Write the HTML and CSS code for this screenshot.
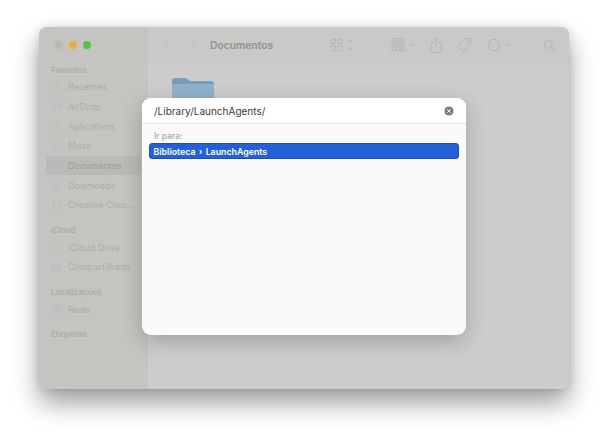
FILE: index.html
```html
<!DOCTYPE html>
<html lang="pt">
<head>
<meta charset="utf-8">
<title>Finder</title>
<link rel="stylesheet" href="styles.css">
</head>
<body>
<div class="window">
  <aside class="sidebar">
    <div class="lights"><i class="light grey"></i><i class="light yellow"></i><i class="light green"></i></div>
    <div class="label first">Favoritos</div>
    <div class="row"><svg class="ic" viewBox="0 0 14 14"><circle cx="7" cy="7" r="5.2"/><path d="M7 3.6V7L5 8.6"/></svg>Recentes</div>
    <div class="row"><svg class="ic" viewBox="0 0 14 14"><path class="fill" d="M7 1.5a6 6 0 0 0-5.600 8.200L3 12h1.200L6 7.500h2L9.800 12H11l1.600-2.300A6 6 0 0 0 7 1.500z"/></svg>AirDrop</div>
    <div class="row"><svg class="ic" viewBox="0 0 14 14"><path d="M7.800 2 3.500 10M6.200 2l4.300 8M2 10h10M5.500 6.500h3"/></svg>Aplicativos</div>
    <div class="row"><svg class="ic" viewBox="0 0 14 14"><rect x="1.500" y="2.500" width="11" height="9" rx="1.200"/><path class="fill" d="M2 9h10v2H2z"/></svg>Mesa</div>
    <div class="row active"><svg class="ic" viewBox="0 0 14 14"><path d="M3 1.500h5l3 3v8H3zM8 1.500v3h3"/></svg>Documentos</div>
    <div class="row"><svg class="ic" viewBox="0 0 14 14"><circle cx="7" cy="7" r="5.200"/><path d="M7 3.800v6M4.800 7.600 7 9.800l2.200-2.200"/></svg>Downloads</div>
    <div class="row"><svg class="ic" viewBox="0 0 14 14"><path d="M3 1.500h5l3 3v8H3zM8 1.500v3h3"/></svg>Creative Clou...</div>
    <div class="label">iCloud</div>
    <div class="row"><svg class="ic" viewBox="0 0 14 14"><path d="M4 11h6.500a2.500 2.500 0 0 0 .4-5A3.500 3.500 0 0 0 4.200 5.400 2.900 2.900 0 0 0 4 11z"/></svg>iCloud Drive</div>
    <div class="row"><svg class="ic" viewBox="0 0 14 14"><path d="M1.500 4h4l1 1.200h4V12h-9zM1.500 6.500h9"/><circle class="fill" cx="11.500" cy="3.500" r="1.500"/></svg>Compartilhado</div>
    <div class="label">Localizações</div>
    <div class="row"><svg class="ic" viewBox="0 0 14 14"><circle cx="7" cy="7" r="5.200"/><path d="M2 7h10M7 2v10M3.500 4h7M3.500 10h7"/></svg>Rede</div>
    <div class="label">Etiquetas</div>
  </aside>
  <main class="main">
    <header class="toolbar">
      <svg class="tb nav" viewBox="0 0 12 16"><path d="M8.500 2.500 3 8l5.500 5.500"/></svg>
      <svg class="tb nav next" viewBox="0 0 12 16"><path d="M3.500 2.500 9 8l-5.500 5.500"/></svg>
      <span class="title">Documentos</span>
      <svg class="tb grid" viewBox="0 0 24 14"><rect x="1" y="1" width="4.500" height="4.500" rx=".8"/><rect x="7.500" y="1" width="4.500" height="4.500" rx=".8"/><rect x="1" y="8" width="4.500" height="4.500" rx=".8"/><rect x="7.500" y="8" width="4.500" height="4.500" rx=".8"/><path d="m17.500 5 2.500-3 2.500 3M17.500 9l2.500 3 2.500-3"/></svg>
      <svg class="tb group" viewBox="0 0 32 14"><path d="M1 .8h12.500M1 7.500h12.500"/><rect x="1" y="2.800" width="3.300" height="3"/><rect x="5.600" y="2.800" width="3.300" height="3"/><rect x="10.200" y="2.800" width="3.300" height="3"/><rect x="1" y="9.300" width="3.300" height="3.500"/><rect x="5.600" y="9.300" width="3.300" height="3.500"/><rect x="10.200" y="9.300" width="3.300" height="3.500"/><path d="m18 5.500 2.700 2.700 2.700-2.700"/></svg>
      <svg class="tb share" viewBox="0 0 14 18"><path d="M4.500 6.500H2v10h10v-10H9.500M7 11.500V1.500M4.500 3.800 7 1.300l2.500 2.500"/></svg>
      <svg class="tb tag" viewBox="0 0 16 16"><path d="M9.500 1.500h4.500a.5.500 0 0 1 .5.500v4.500L7 14.500 1.500 9z"/><circle cx="11.700" cy="4.300" r=".8"/></svg>
      <svg class="tb more" viewBox="0 0 28 14"><circle cx="7" cy="7" r="5.700"/><path class="dots" d="M4.500 7h.01M7 7h.01M9.500 7h.01"/><path d="m18 5.500 2.700 2.700 2.700-2.700"/></svg>
      <svg class="tb search" viewBox="0 0 14 14"><circle cx="5.800" cy="5.800" r="4.300"/><path d="m9 9 4 4"/></svg>
    </header>
    <section class="content">
      <svg class="folder" viewBox="0 0 42 24"><path class="tab" d="M0 5a3 3 0 0 1 3-3h11l4 3h21a3 3 0 0 1 3 3v16H0z"/><path class="body" d="M0 8h42v16H0z"/></svg>
    </section>
  </main>
</div>
<div class="dialog">
  <div class="field"><span>/Library/LaunchAgents/</span><svg class="clear" viewBox="0 0 10 10"><circle cx="5" cy="5" r="5"/><path d="m3.200 3.200 3.600 3.600M6.800 3.200 3.200 6.800"/></svg></div>
  <div class="results">
    <div class="caption">Ir para:</div>
    <div class="hit">Biblioteca <b>›</b> LaunchAgents</div>
  </div>
</div>
</body>
</html>
```
FILE: styles.css
```css
* { box-sizing: border-box; }
html, body { margin: 0; height: 100%; }
body {
  background: #fff;
  font-family: "Inter", "Liberation Sans", sans-serif;
  padding: 27px 39px 52px;
  overflow: hidden;
}
.window {
  display: flex;
  height: 362px;
  border-radius: 8px;
  overflow: hidden;
  background: #cdcdcd;
  box-shadow: 0 14px 26px rgba(0,0,0,.38), 0 0 8px rgba(0,0,0,.12);
}
.sidebar {
  width: 109px;
  flex: none;
  background: #c6c4c1;
  padding: 0 7px;
}
.lights { display: flex; gap: 6px; padding: 14px 0 0 9px; height: 37px; }
.light { width: 8px; height: 8px; border-radius: 50%; }
.grey { background: #bab8b6; }
.yellow { background: #e5b23f; }
.green { background: #5ac14f; }
.label {
  font-size: 8px;
  font-weight: 600;
  color: #adabaa;
  height: 12px;
  line-height: 12px;
  margin: 9.500px 0 0 5px;
}
.label.first { margin-top: 0; }
.row {
  display: flex;
  align-items: center;
  gap: 5px;
  height: 19.700px;
  font-size: 9px;
  padding-left: 5px;
  border-radius: 4px;
  white-space: nowrap;
  color: #aeacaa;
}
.label + .row { margin-top: 1px; }
.row.active { background: #bcbab7; color: #9e9c9a; }
.ic { width: 12px; height: 12px; flex: none; fill: none; stroke: #b7bcc4; stroke-width: 1; }
.ic .fill { fill: #bcc0c6; stroke: none; }
.main { flex: 1; display: flex; flex-direction: column; min-width: 0; }
.toolbar {
  height: 36px;
  flex: none;
  background: #cbc9c7;
  display: flex;
  align-items: center;
  padding-left: 14px;
}
.tb { fill: none; stroke: #b6b4b2; stroke-width: 1; flex: none; }
.nav { width: 10px; height: 14px; stroke-width: 1.200; }
.next { margin-left: 16px; }
.title { font-size: 10.300px; font-weight: 600; color: #94928f; margin-left: 12px; width: 120px; }
.grid { width: 24px; height: 14px; }
.group { width: 32px; height: 14px; margin-left: 37px; }
.share { width: 14px; height: 18px; margin-left: 6px; }
.tag { width: 16px; height: 16px; margin-left: 13px; }
.more { width: 28px; height: 14px; margin-left: 15px; }
.dots { stroke-width: 1.200; stroke-linecap: round; }
.search { width: 13px; height: 13px; margin-left: 28px; }
.content { flex: 1; padding: 13px 0 0 24px; }
.folder { display: block; width: 42px; height: 24px; }
.folder .tab { fill: #7d9cba; }
.folder .body { fill: #8fb2cb; }
.dialog {
  position: absolute;
  left: 142px;
  top: 98px;
  width: 324px;
  height: 237px;
  background: #fafafa;
  border-radius: 9px;
  overflow: hidden;
  box-shadow: 0 6px 22px rgba(0,0,0,.22);
}
.field {
  height: 26px;
  background: #fff;
  border-bottom: 1px solid #e6e6e6;
  display: flex;
  align-items: center;
  justify-content: space-between;
  padding: 0 12px;
  font-size: 10px;
  color: #3a3a3a;
}
.clear { width: 10px; height: 10px; fill: #7b7b7b; stroke: #f2f2f2; stroke-width: 1; }
.results { padding: 6px 7px 0; }
.caption { font-size: 8.500px; font-weight: 500; color: #a9a9a9; height: 12px; line-height: 12px; padding-left: 5px; }
.hit {
  margin-top: 1px;
  height: 16px;
  background: #2460d8;
  border: 1px solid #1e4fb4;
  border-radius: 3px;
  color: #fff;
  font-size: 8.800px;
  font-weight: 600;
  padding-left: 3.500px;
  line-height: 15px;
}
.hit b { font-weight: 600; margin: 0 1px; }
```
